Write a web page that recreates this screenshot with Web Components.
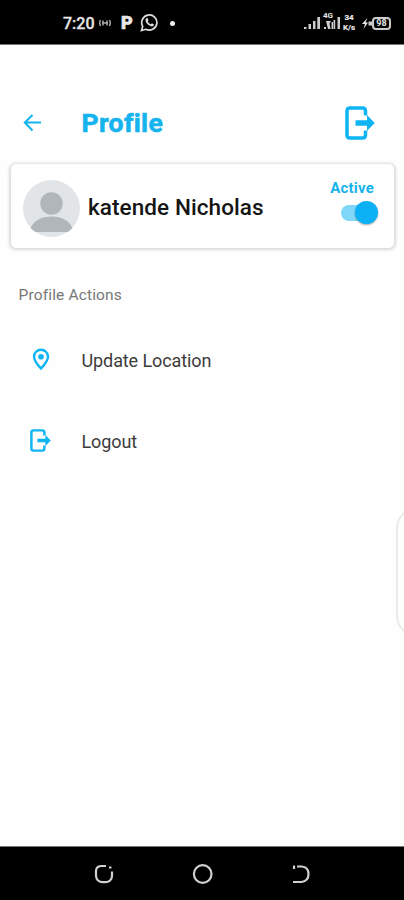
<!DOCTYPE html>
<html lang="en">
<head>
<meta charset="utf-8">
<title>Profile</title>
<style>
html,body{margin:0;padding:0;background:#fefefe;overflow:hidden}
body{font-family:Roboto,"Liberation Sans",sans-serif}
</style>
</head>
<body>
<profile-screen></profile-screen>
<script>
const define = (name, html) => customElements.define(name, class extends HTMLElement {
  constructor() {
    super();
    this.attachShadow({ mode: 'open' }).innerHTML = html;
  }
});

define('exit-icon', `
<style>:host{display:block;color:#0fb4f2}svg{display:block;width:100%;height:100%}</style>
<svg viewBox="0 0 30 34" preserveAspectRatio="none"><path d="M20.500 9.500V5Q20.500 2 17.500 2H5Q2 2 2 5V29Q2 32 5 32H17.500Q20.500 32 20.500 29V24.500" fill="none" stroke="currentColor" stroke-width="3.500"/><path d="M10.500 14.300H22V9L29.700 17 22 25V19.700H10.500Z" fill="currentColor"/></svg>`);

define('status-bar', `
<style>
:host{display:flex;box-sizing:border-box;height:45px;background:#000;color:#e6e6e6;align-items:center;padding:2px 13px 0 63px;border-bottom:1px solid #777}
.time{font-size:16px;font-weight:500;width:36px;-webkit-text-stroke:.3px currentColor}
svg{display:block;flex:none}
.p{font:900 18px/20px Roboto,sans-serif;width:15px;margin-left:10px;-webkit-text-stroke:.6px currentColor}
.dot{width:5px;height:5px;border-radius:50%;background:#f0f0f0;margin-left:11px}
.gap{flex:1}
.lte{font:700 8px/8px Roboto,sans-serif;width:18px;height:18px;position:relative}
.lte span{position:absolute;left:0;top:-2px}
.rate{display:flex;flex-direction:column;font:700 8px/10px Roboto,sans-serif;text-align:center;width:14px;margin:0 6px 0 1px;-webkit-text-stroke:.2px currentColor}
.cell{box-sizing:border-box;width:19px;height:13px;border:2px solid #ccc;border-radius:4px;font:700 9px/9px Roboto,sans-serif;text-align:center}
</style>
<span class="time">7:20</span>
<svg width="12" height="10" viewBox="0 0 12 10" fill="none" stroke="#aaa" stroke-width="1.500"><path d="M1.500 2Q0 5 1.500 8M10.500 2Q12 5 10.500 8M4 2.500V7.500M8 2.500V7.500M3 5H9"/></svg>
<span class="p">P</span>
<svg width="19" height="19" viewBox="0 0 19 19" style="margin-left:4px;margin-top:-1px"><path d="M1.500 17.500 2.700 13.300A7.600 7.600 0 1 1 5.800 16.300Z" fill="none" stroke="#ddd" stroke-width="1.700"/><path d="M6.200 5.200 7.500 5 8.500 7.200 7.700 8.400Q8.700 10.400 10.800 11.300L12 10.300 14 11.400Q14 13.500 11.600 13.500 8.500 13 6.500 10 4.700 7 6.200 5.200Z" fill="#ddd"/></svg>
<span class="dot"></span><span class="gap"></span>
<svg width="17" height="13" viewBox="0 0 17 13" fill="#ccc"><path d="M0 10H2.500V12H0ZM4.500 7H7V12H4.500ZM9 4H11.500V12H9ZM13.300 0H16V12H13.300Z"/></svg>
<span class="lte" style="margin-left:2px"><span>4G</span><svg width="18" height="18" viewBox="0 0 18 18" fill="#ccc"><path d="M1 13H3V15H1ZM3 7H8L6.500 9.500 7.500 15H5ZM8.500 8H10V15H8.500ZM10.500 6H12.200V15H10.500ZM14.500 3H17V15H14.500Z"/></svg></span>
<span class="rate"><span>34</span><span>K/s</span></span>
<svg width="10" height="13" viewBox="0 0 10 13"><path d="M5.500 1 0 7H3L1.500 12 6 5.500H3.500Z" fill="#eee"/><path d="M6.500 4.500H10V8.500H6.500Z" fill="#ccc"/></svg>
<span class="cell">98</span>`);

define('page-header', `
<style>
:host{display:flex;box-sizing:border-box;height:119px;align-items:center;padding:37px 29.500px 0 23px;color:#16b4ee}
h1{margin:0 auto 0 40.500px;font-size:26.500px;font-weight:700;line-height:32px;-webkit-text-stroke:.6px;letter-spacing:.35px}
svg{display:block;margin-top:-1px}
exit-icon{width:30px;height:34px}
</style>
<svg width="18" height="18" viewBox="0 0 18 18" fill="none" stroke="#16b4ee" stroke-width="2"><path d="M9.500 1 1.800 8.500 9.500 16.500M2 8.500H18"/></svg>
<h1><slot></slot></h1><exit-icon></exit-icon>`);

define('user-avatar', `
<style>:host{display:block;width:57px;height:57px}svg{display:block}</style>
<svg width="57" height="57" viewBox="0 0 57 57"><circle cx="28.500" cy="28.500" r="28.500" fill="#e1e5e8"/><circle cx="28.500" cy="23.500" r="11.200" fill="#b1b6ba"/><path d="M7.500 48Q13 36.500 28.500 36.500T49.500 48Q46.500 51 44.500 52H12.500Q10 50.500 7.500 48Z" fill="#b1b6ba"/></svg>`);

define('toggle-switch', `
<style>
:host{display:flex;box-sizing:border-box;width:33px;height:16px;border-radius:8px;background:#7fd8f8;align-items:center;justify-content:flex-end}
i{flex:none;width:23px;height:23px;border-radius:50%;background:#0bb0f5;margin-right:-4px;box-shadow:0 1px 2px #0005}
</style><i></i>`);

define('profile-card', `
<style>
:host{display:flex;box-sizing:border-box;height:84px;margin:0 10px 0 11px;border-radius:5px;background:#fff;box-shadow:0 .5px 3px 1.500px #00000024;align-items:center;padding:4px 20px 0 12px}
h2{flex:1;margin:0 0 3px 8px;font-size:22.500px;line-height:28px;font-weight:500;color:#151515;white-space:nowrap;letter-spacing:.08px}
.state{display:flex;flex-direction:column;align-items:flex-end;height:68px}
.state span{font-size:15px;line-height:18px;font-weight:700;color:#18b3ea;letter-spacing:.2px;padding-top:5px}
toggle-switch{margin:7.500px .5px 0 0}
</style>
<user-avatar></user-avatar><h2><slot></slot></h2>
<div class="state"><span>Active</span><toggle-switch></toggle-switch></div>`);

define('action-row', `
<style>
:host{display:flex;align-items:center;height:81px;padding-left:29px;font-size:18px;letter-spacing:-.1px;color:#3c3c3c}
.icon{width:23px;display:flex;justify-content:center;margin-right:29.500px}
</style><div class="icon"><slot name="icon"></slot></div><slot></slot>`);

define('pin-icon', `
<style>:host{display:block}svg{display:block}</style>
<svg width="18" height="23" viewBox="0 0 18 23"><path d="M9 1.700A7 7 0 0 0 2 8.700C2 13 9 20.500 9 20.500S16 13 16 8.700A7 7 0 0 0 9 1.700Z" fill="none" stroke="#0fb4f2" stroke-width="2.400"/><circle cx="9" cy="8.700" r="2.800" fill="#0fb4f2"/></svg>`);

define('system-nav', `
<style>
:host{display:flex;box-sizing:border-box;height:54px;background:#000;border-top:1px solid #777;align-items:center;justify-content:space-between;padding:0 92px 0 93px}
svg{display:block}
</style>
<svg width="22" height="22" viewBox="0 0 22 22" fill="none" stroke="#d0d0d0" stroke-width="2.200"><path d="M13 3H8Q3 3.500 3 8V13Q3.500 19 10 19.200 19 19.500 19 13V8.500M16 4.500H18.500" /></svg>
<svg width="22" height="22" viewBox="0 0 22 22" fill="none" stroke="#d0d0d0" stroke-width="2.200"><circle cx="10.700" cy="11" r="8.800"/></svg>
<svg width="22" height="22" viewBox="0 0 22 22" fill="none" stroke="#d0d0d0" stroke-width="2.200"><path d="M7 3.500H11.500Q18.500 4 18.500 11T11.500 19H3M3 3.500H5M4 3V6"/></svg>`);

define('edge-handle', `
<style>
:host{display:block;position:absolute;left:396px;top:510px;width:8px;height:124px}svg{display:block}
</style>
<svg width="8" height="124" viewBox="0 0 8 124"><path d="M9 2Q1 9 1 18V106Q1 115 9 122" fill="#fff" stroke="#ebebeb" stroke-width="2"/></svg>`);

define('profile-screen', `
<style>
:host{display:flex;flex-direction:column;position:relative;width:404px;height:900px;overflow:hidden;background:#fefefe}
h3{margin:38px 0 16px 18.500px;font-size:15.500px;line-height:18px;font-weight:400;letter-spacing:.15px;color:#777}
exit-icon{width:21px;height:23px;margin-top:-2px}
pin-icon{margin-top:-2px}
system-nav{margin-top:auto}
</style>
<status-bar></status-bar>
<page-header>Profile</page-header>
<profile-card>katende Nicholas</profile-card>
<h3>Profile Actions</h3>
<action-row><pin-icon slot="icon"></pin-icon>Update Location</action-row>
<action-row><exit-icon slot="icon"></exit-icon>Logout</action-row>
<edge-handle></edge-handle>
<system-nav></system-nav>`);
</script>
</body>
</html>
